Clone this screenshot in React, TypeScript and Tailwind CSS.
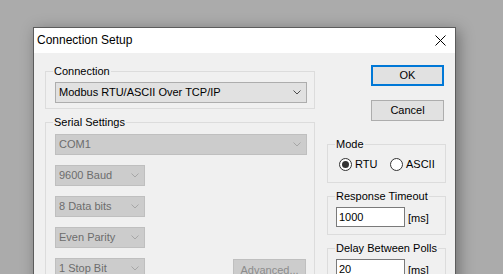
import React from 'react';

const font = "font-['Liberation_Sans',Arial,sans-serif]";

const Chevron = ({ disabled }: { disabled?: boolean }) => (
  <svg width="8" height="5" viewBox="0 0 8 5" className="shrink-0">
    <polyline
      points="0.5,0.5 4,4 7.5,0.5"
      fill="none"
      stroke={disabled ? '#a6a6a6' : '#4d4d4d'}
      strokeWidth="1"
    />
  </svg>
);

const Combo = ({ value, width, disabled }: { value: string; width: string; disabled?: boolean }) => (
  <div
    className={`${width} h-[21px] flex items-center justify-between pl-[3px] pr-[5px] border ${
      disabled ? 'bg-[#cccccc] border-[#bfbfbf] text-[#6d6d6d]' : 'bg-[#e1e1e1] border-[#adadad] text-black'
    }`}
  >
    <span className="leading-[13px]">{value}</span>
    <Chevron disabled={disabled} />
  </div>
);

// group box: padding lives on the inner div so the legend keeps its own offset
const GroupBox = ({
  label,
  className,
  bodyClass,
  children,
}: {
  label: string;
  className?: string;
  bodyClass?: string;
  children: React.ReactNode;
}) => (
  <fieldset className={`border border-[#dcdcdc] ${className ?? ''}`}>
    <legend className="ml-[7px] px-[1px] leading-[13px] text-black whitespace-nowrap">{label}</legend>
    <div className={bodyClass}>{children}</div>
  </fieldset>
);

const Radio = ({ label, checked }: { label: string; checked?: boolean }) => (
  <div className="flex items-center gap-[3px]">
    <span className="w-[13px] h-[13px] rounded-full border border-[#333333] bg-white flex items-center justify-center">
      {checked && <span className="w-[7px] h-[7px] rounded-full bg-[#333333]" />}
    </span>
    <span className="leading-[13px]">{label}</span>
  </div>
);

const TimeField = ({ value }: { value: string }) => (
  <div className="flex items-center">
    <div className="w-[69px] h-[20px] border border-[#7a7a7a] bg-white pl-[2px] leading-[18px]">{value}</div>
    <span className="ml-[3px] leading-[13px] mt-[3px]">[ms]</span>
  </div>
);

export default function App() {
  return (
    <div className={`w-[503px] h-[274px] overflow-hidden bg-[#ababab] pl-[33px] pt-[27px] text-[11px] ${font}`}>
      <div className="w-[423px] h-[260px] border border-[#5c5c5c] bg-[#f0f0f0] shadow-[3px_3px_14px_rgba(0,0,0,0.35)]">
        {/* Title bar */}
        <div className="h-[25px] bg-white flex items-start justify-between">
          <span className="pl-[3px] pt-[5px] text-[12px] leading-[14px] text-black">Connection Setup</span>
          <svg width="11" height="11" viewBox="0 0 11 11" className="mt-[7px] mr-[9px]">
            <line x1="0.5" y1="0.5" x2="10.5" y2="10.5" stroke="#000" strokeWidth="1" />
            <line x1="10.5" y1="0.5" x2="0.5" y2="10.5" stroke="#000" strokeWidth="1" />
          </svg>
        </div>

        {/* Body */}
        <div className="flex pl-[11px] gap-[12px]">
          {/* Left column */}
          <div className="w-[270px] flex flex-col">
            <GroupBox label="Connection" className="mt-[12px]" bodyClass="pl-[9px] pr-[7px] pb-[5px] pt-[4px]">
              <Combo value="Modbus RTU/ASCII Over TCP/IP" width="w-[252px]" />
            </GroupBox>

            <GroupBox label="Serial Settings" className="mt-[7px]" bodyClass="pl-[9px] pr-[7px] pb-[8px] pt-[5px]">
              <div className="flex flex-col gap-[10px]">
                <Combo value="COM1" width="w-[252px]" disabled />
                <Combo value="9600 Baud" width="w-[90px]" disabled />
                <Combo value="8 Data bits" width="w-[90px]" disabled />
                <Combo value="Even Parity" width="w-[90px]" disabled />
                <div className="flex items-start justify-between">
                  <Combo value="1 Stop Bit" width="w-[90px]" disabled />
                  <div className="mt-[1px] mr-[1px] w-[73px] h-[23px] border border-[#bfbfbf] bg-[#cccccc] text-[#8c8c8c] flex items-center justify-center leading-[13px]">
                    Advanced...
                  </div>
                </div>
              </div>
            </GroupBox>
          </div>

          {/* Right column */}
          <div className="w-[119px] flex flex-col">
            <div className="mt-[12px] ml-[44px] w-[73px] h-[21px] border-2 border-[#0078d7] bg-[#e1e1e1] flex items-center justify-center leading-[13px]">
              OK
            </div>
            <div className="mt-[14px] ml-[44px] w-[73px] h-[21px] border border-[#adadad] bg-[#e1e1e1] flex items-center justify-center leading-[13px]">
              Cancel
            </div>

            <GroupBox label="Mode" className="mt-[17px]" bodyClass="pl-[11px] pb-[11px] pt-[7px]">
              <div className="flex">
                <div className="w-[51px]">
                  <Radio label="RTU" checked />
                </div>
                <Radio label="ASCII" />
              </div>
            </GroupBox>

            <GroupBox label="Response Timeout" className="mt-[7px]" bodyClass="pl-[8px] pb-[7px] pt-[4px]">
              <TimeField value="1000" />
            </GroupBox>

            <GroupBox label="Delay Between Polls" className="mt-[7px]" bodyClass="pl-[8px] pb-[7px] pt-[4px]">
              <TimeField value="20" />
            </GroupBox>
          </div>
        </div>
      </div>
    </div>
  );
}
